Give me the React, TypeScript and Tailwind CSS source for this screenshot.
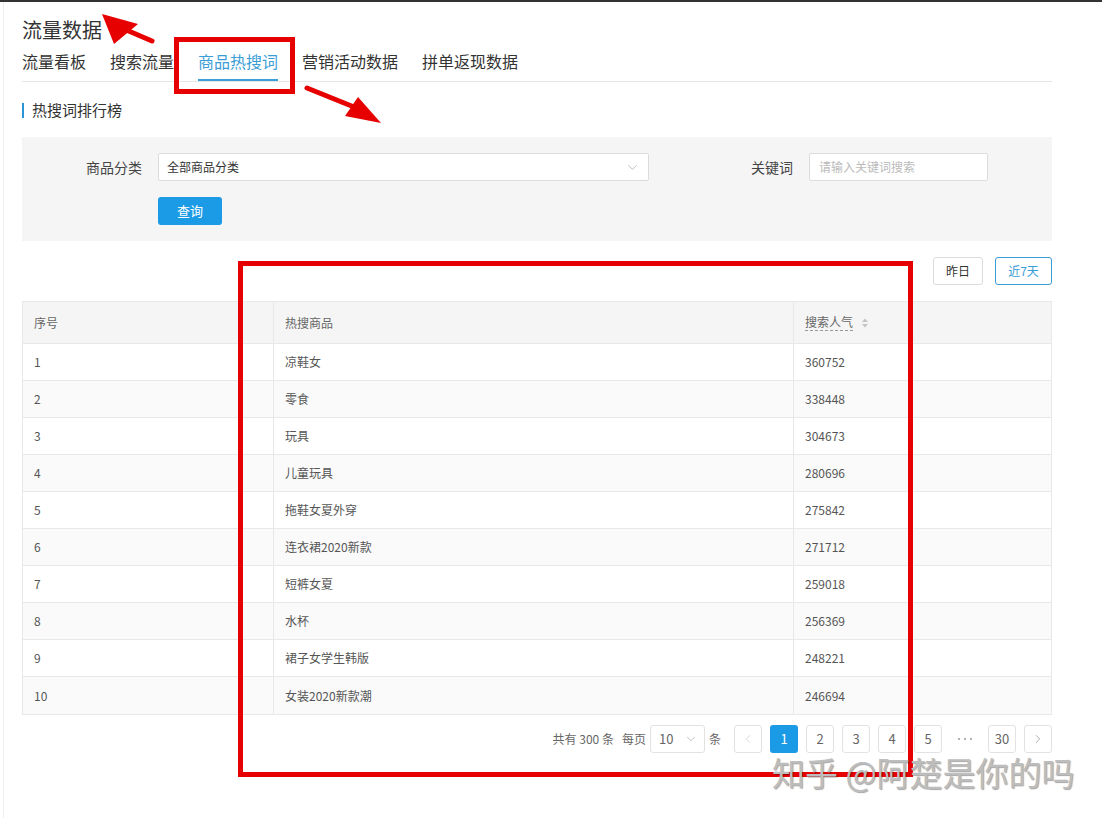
import { ChevronDown, ChevronLeft, ChevronRight } from "lucide-react"

const rows = [
    { id: 1, word: "凉鞋女", hot: "360752" },
    { id: 2, word: "零食", hot: "338448" },
    { id: 3, word: "玩具", hot: "304673" },
    { id: 4, word: "儿童玩具", hot: "280696" },
    { id: 5, word: "拖鞋女夏外穿", hot: "275842" },
    { id: 6, word: "连衣裙2020新款", hot: "271712" },
    { id: 7, word: "短裤女夏", hot: "259018" },
    { id: 8, word: "水杯", hot: "256369" },
    { id: 9, word: "裙子女学生韩版", hot: "248221" },
    { id: 10, word: "女装2020新款潮", hot: "246694" }
]

const tabs = ["流量看板", "搜索流量", "商品热搜词", "营销活动数据", "拼单返现数据"]

function PageBtn({ children, active }: { children: React.ReactNode; active?: boolean }) {
    return (
        <div
            className={
                active
                    ? "flex h-[28px] w-[28px] items-center justify-center rounded-[3px] bg-[#1b9ae6] text-[13px] text-white"
                    : "flex h-[28px] w-[28px] items-center justify-center rounded-[3px] border border-[#e2e2e2] bg-white text-[13px] text-[#666]"
            }
        >
            {children}
        </div>
    )
}

export default function App() {
    return (
        <div
            className="relative h-[818px] w-[1102px] overflow-hidden border-t-2 border-[#333] bg-white text-[#555]"
            style={{ fontFamily: '"Noto Sans CJK SC", "Noto Sans", sans-serif' }}
        >
            <div className="absolute bottom-0 left-[3px] top-0 w-px bg-[#eee]" />
            <div className="w-[1052px] pl-[22px]">
                <h1 className="pt-[14px] text-[20px] leading-[28px] text-[#333]">流量数据</h1>

                <div className="flex h-[38px] gap-[24px] border-b border-[#e6e6e6]">
                    {tabs.map((t) => (
                        <div
                            key={t}
                            className={
                                t === "商品热搜词"
                                    ? "border-b-2 border-[#3aa0d8] pt-[6px] text-[16px] leading-[22px] text-[#3a9dd6]"
                                    : "pt-[6px] text-[16px] leading-[22px] text-[#333]"
                            }
                        >
                            {t}
                        </div>
                    ))}
                </div>

                <div className="mt-[20px] flex h-[16px] items-center">
                    <div className="h-[15px] w-[2px] bg-[#2b95d6]" />
                    <span className="ml-[8px] text-[15px] leading-[16px] text-[#333]">热搜词排行榜</span>
                </div>

                <div className="mt-[19px] h-[104px] bg-[#f5f5f5] pt-[16px]">
                    <div className="flex h-[28px] items-center">
                        <div className="w-[120px] text-right text-[14px] text-[#444]">商品分类</div>
                        <div className="ml-[16px] flex h-[28px] w-[491px] items-center justify-between rounded-[2px] border border-[#dcdcdc] bg-white pl-[8px] pr-[8px] text-[12px] text-[#333]">
                            <span>全部商品分类</span>
                            <ChevronDown size={15} strokeWidth={1.2} className="text-[#aaa]" />
                        </div>
                        <div className="w-[144px] text-right text-[14px] text-[#444]">关键词</div>
                        <div className="ml-[16px] flex h-[28px] w-[179px] items-center rounded-[2px] border border-[#dcdcdc] bg-white pl-[9px] text-[12px] text-[#bbb]">
                            请输入关键词搜索
                        </div>
                    </div>
                    <div className="ml-[136px] mt-[16px] flex h-[28px] w-[64px] items-center justify-center rounded-[3px] bg-[#1b9ae6] text-[13px] text-white">
                        查询
                    </div>
                </div>

                <div className="mt-[16px] flex h-[28px] justify-end gap-[12px]">
                    <div className="flex w-[50px] items-center justify-center rounded-[3px] border border-[#dcdcdc] text-[12px] text-[#333]">
                        昨日
                    </div>
                    <div className="flex w-[57px] items-center justify-center rounded-[3px] border border-[#3a9dd6] text-[12px] text-[#3a9dd6]">
                        近7天
                    </div>
                </div>

                <div className="mt-[16px] border border-[#e8e8e8] text-[12px]">
                    <div className="grid h-[42px] grid-cols-[250px_520px_1fr] border-b border-[#e8e8e8] bg-[#f5f5f5] text-[#666]">
                        <div className="flex items-center pl-[11px]">序号</div>
                        <div className="flex items-center border-l border-[#e8e8e8] pl-[11px]">热搜商品</div>
                        <div className="flex items-center border-l border-[#e8e8e8] pl-[11px]">
                            <span className="border-b border-dashed border-[#999] leading-[16px]">搜索人气</span>
                            <svg width="8" height="10" viewBox="0 0 8 10" className="ml-[8px]">
                                <path d="M4 0.5 L7 4 L1 4 Z" fill="#c4c4c4" />
                                <path d="M4 9.5 L7 6 L1 6 Z" fill="#c4c4c4" />
                            </svg>
                        </div>
                    </div>
                    {rows.map((r, i) => (
                        <div
                            key={r.id}
                            className={
                                (i % 2 === 1 ? "bg-[#fafafa] " : "bg-white ") +
                                (i < rows.length - 1 ? "border-b border-[#e8e8e8] " : "") +
                                "grid h-[37px] grid-cols-[250px_520px_1fr] text-[#555]"
                            }
                        >
                            <div className="flex items-center pl-[11px]">{r.id}</div>
                            <div className="flex items-center border-l border-[#e8e8e8] pl-[11px]">{r.word}</div>
                            <div className="flex items-center border-l border-[#e8e8e8] pl-[11px]">{r.hot}</div>
                        </div>
                    ))}
                </div>

                <div className="mt-[10px] flex h-[28px] items-center justify-end text-[12px] text-[#666]">
                    <span>共有 300 条</span>
                    <span className="ml-[8px]">每页</span>
                    <div className="ml-[4px] flex h-[28px] w-[55px] items-center justify-between rounded-[3px] border border-[#e2e2e2] pl-[8px] pr-[6px] text-[13px]">
                        <span>10</span>
                        <ChevronDown size={14} strokeWidth={1.2} className="text-[#aaa]" />
                    </div>
                    <span className="ml-[4px]">条</span>
                    <div className="ml-[13px] flex gap-[8px]">
                        <PageBtn>
                            <ChevronLeft size={14} strokeWidth={1.2} className="text-[#ccc]" />
                        </PageBtn>
                        <PageBtn active>1</PageBtn>
                        <PageBtn>2</PageBtn>
                        <PageBtn>3</PageBtn>
                        <PageBtn>4</PageBtn>
                        <PageBtn>5</PageBtn>
                        <div className="flex h-[28px] w-[30px] items-center justify-center gap-[4px]">
                            <span className="h-[2px] w-[2px] rounded-full bg-[#999]" />
                            <span className="h-[2px] w-[2px] rounded-full bg-[#999]" />
                            <span className="h-[2px] w-[2px] rounded-full bg-[#999]" />
                        </div>
                        <PageBtn>30</PageBtn>
                        <PageBtn>
                            <ChevronRight size={14} strokeWidth={1.2} className="text-[#888]" />
                        </PageBtn>
                    </div>
                </div>
            </div>

            {/* annotations drawn over the screenshot */}
            <div className="absolute left-[174px] top-[35px] h-[57px] w-[121px] border-[5px] border-[#e60000]" />
            <div className="absolute left-[238px] top-[259px] h-[516px] w-[675px] border-[5px] border-[#e60000]" />
            <svg className="absolute left-0 top-0" width="1102" height="818" viewBox="0 0 1102 818">
                <line x1="152" y1="39" x2="124" y2="27" stroke="#e60000" strokeWidth="5" strokeLinecap="round" />
                <path d="M102 12 L138 22 L114 42 Z" fill="#e60000" />
                <line x1="307" y1="86" x2="354" y2="105" stroke="#e60000" strokeWidth="5" strokeLinecap="round" />
                <path d="M381 121 L358 95 L345 114 Z" fill="#e60000" />
            </svg>
            <div className="absolute left-[772px] top-[750px] text-[33px] leading-[40px] text-[#bdbdbd] [text-shadow:1px_1px_1px_rgba(0,0,0,0.35)]">
                知乎 @阿楚是你的吗
            </div>
        </div>
    )
}
